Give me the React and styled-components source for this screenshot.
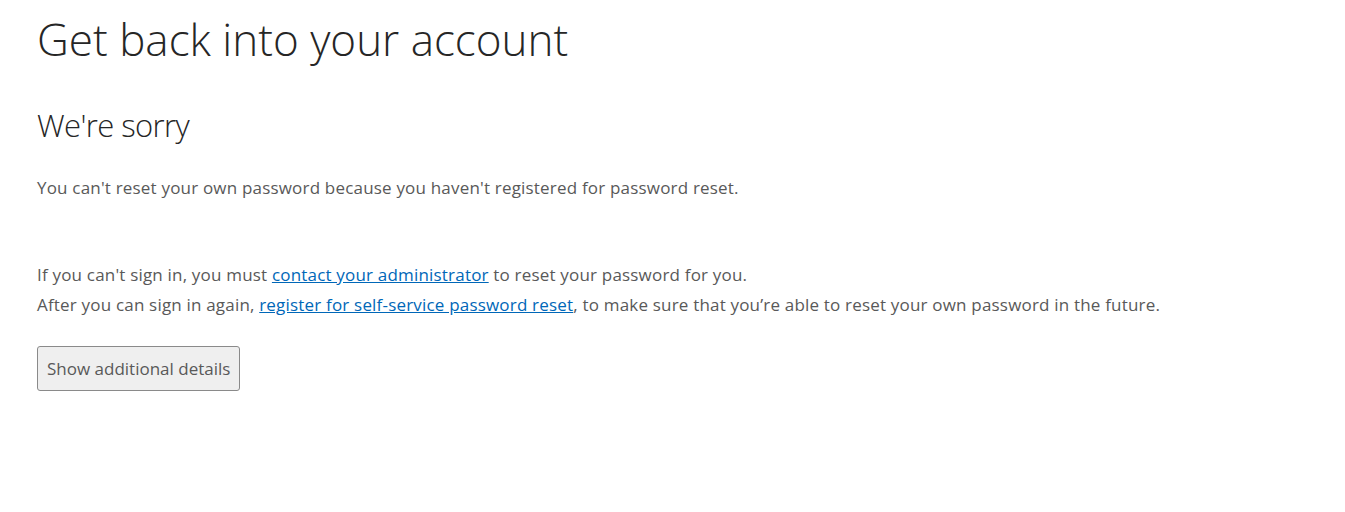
import React from 'react';
import styled, { createGlobalStyle } from 'styled-components';

const colors = {
  heading: '#262626',
  text: '#595959',
  link: '#0067b8',
  buttonBg: '#efefef',
  buttonBorder: '#8a8a8a',
};

const GlobalStyle = createGlobalStyle`
  body {
    margin: 0;
    background: #ffffff;
    font-family: "Open Sans", "Noto Sans", sans-serif;
  }
`;

const Page = styled.main`
  padding: 9px 37px 40px;
`;

const Title = styled.h1`
  margin: 0;
  font-size: 44px;
  font-weight: 300;
  line-height: 60px;
  color: ${colors.heading};
`;

const Subtitle = styled.h2`
  margin: 34px 0 0;
  font-size: 31px;
  font-weight: 300;
  line-height: 44px;
  color: ${colors.heading};
  letter-spacing: -0.6px;
`;

const Paragraph = styled.p`
  margin: ${(p) => p.$top || 0}px 0 0;
  font-size: 17px;
  line-height: 30px;
  color: ${colors.text};
  letter-spacing: 0.19px;
`;

const Link = styled.a`
  color: ${colors.link};
  text-decoration: underline;
`;

const Button = styled.button`
  margin-top: 26px;
  height: 45px;
  padding: 0 9px;
  font-family: inherit;
  font-size: 17px;
  color: ${colors.text};
  background: ${colors.buttonBg};
  border: 1px solid ${colors.buttonBorder};
  border-radius: 3px;
  cursor: pointer;
`;

export default function App() {
  return (
    <Page>
      <GlobalStyle />
      <Title>Get back into your account</Title>
      <Subtitle>We're sorry</Subtitle>
      <Paragraph $top={26}>
        You can't reset your own password because you haven't registered for password reset.
      </Paragraph>
      <Paragraph $top={57}>
        If you can't sign in, you must <Link href="#">contact your administrator</Link> to reset your password for you.
        <br />
        After you can sign in again, <Link href="#">register for self-service password reset</Link>, to make sure that you’re able to reset your own password in the future.
      </Paragraph>
      <Button type="button">Show additional details</Button>
    </Page>
  );
}
